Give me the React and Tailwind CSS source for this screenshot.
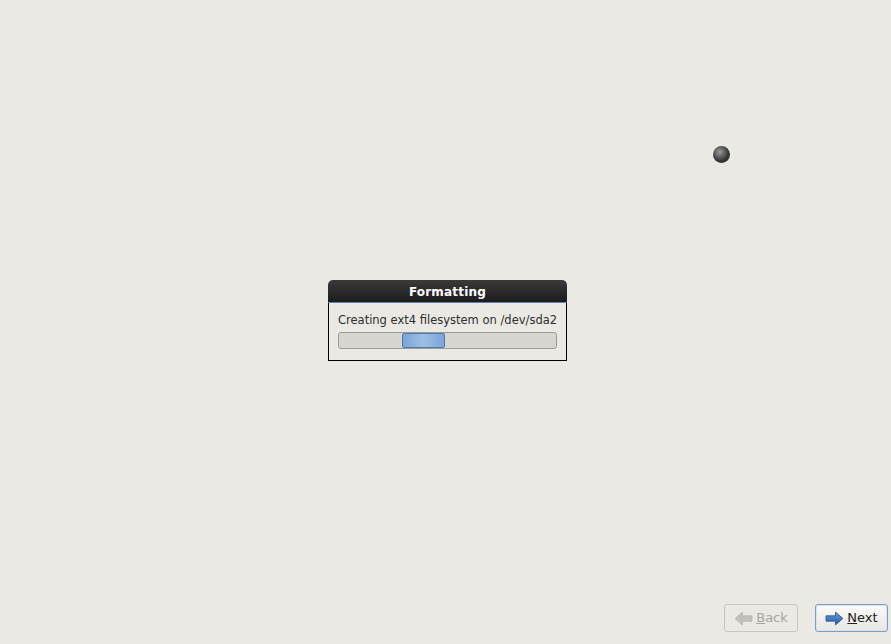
import React from "react";

function ArrowLeft({ color, dark }) {
  return (
    <svg width="19" height="15" viewBox="0 0 18 14">
      <path d="M1 7 L8 1 L8 4.5 L17 4.5 L17 9.5 L8 9.5 L8 13 Z" fill={color} stroke={dark} strokeWidth="0.8" strokeLinejoin="round" />
    </svg>
  );
}
function ArrowRight() {
  return (
    <svg width="19" height="15" viewBox="0 0 18 14">
      <defs>
        <linearGradient id="ar" x1="0" y1="0" x2="0" y2="1">
          <stop offset="0" stopColor="#6e9fd3" />
          <stop offset="1" stopColor="#1f5ea8" />
        </linearGradient>
      </defs>
      <path d="M17 7 L10 1 L10 4.5 L1 4.5 L1 9.5 L10 9.5 L10 13 Z" fill="url(#ar)" stroke="#1c4f8c" strokeWidth="0.8" strokeLinejoin="round" />
    </svg>
  );
}

export default function App() {
  return (
    <div
      className="relative w-[891px] h-[644px] bg-[#ebe9e4] flex flex-col overflow-hidden"
      style={{ fontFamily: '"DejaVu Sans", sans-serif' }}
    >
      <div className="flex-1 flex items-center justify-center pl-[4px] pt-[36px]">
        <div className="w-[239px] flex flex-col">
          <div className="h-[23px] rounded-t-[5px] bg-gradient-to-b from-[#3a3a3a] to-[#1c1c1c] flex items-center justify-center border-b border-[#5b7fa8] pt-[2px]">
            <span className="text-white text-[12px] font-bold tracking-[0.2px]">Formatting</span>
          </div>
          <div className="border-x border-b border-black bg-[#ebe9e4] px-[9px] pt-[8px] pb-[11px] flex flex-col gap-[3px]">
            <div className="text-[11.5px] text-[#2e2e2e] leading-[18px] whitespace-nowrap">Creating ext4 filesystem on /dev/sda2</div>
            <div className="relative h-[17px] rounded-[3px] border border-[#9d9b96] bg-[#d8d6d1]">
              <div className="absolute top-0 bottom-0 left-[63px] w-[43px] rounded-[2px] border border-[#4d79ab] bg-gradient-to-r from-[#7aa5d8] via-[#9dbfe6] to-[#7aa5d8]" />
            </div>
          </div>
        </div>
      </div>

      <div className="flex justify-end gap-[17px] pr-[3px] pb-[12px]">
        <div className="w-[74px] h-[28px] rounded-[3px] border border-[#c8c6c1] bg-[#ebe9e4] flex items-center justify-center gap-[3px] text-[13px] text-[#a8a6a1]">
          <ArrowLeft color="#c3c1bc" dark="#b5b3ae" />
          <span><span className="underline">B</span>ack</span>
        </div>
        <div className="w-[73px] h-[28px] rounded-[3px] border border-[#7f9dbf] bg-gradient-to-b from-[#fbfbfa] to-[#e8e6e1] shadow-[inset_0_0_0_1px_#d7e3f0] flex items-center justify-center gap-[3px] text-[13px] text-[#202020]">
          <ArrowRight />
          <span><span className="underline">N</span>ext</span>
        </div>
      </div>

      <div className="absolute left-[713px] top-[146px] w-[17px] h-[17px] rounded-full bg-[radial-gradient(circle_at_40%_35%,#9a9a9a,#3a3a3a_55%,#1a1a1a)]" />
    </div>
  );
}
